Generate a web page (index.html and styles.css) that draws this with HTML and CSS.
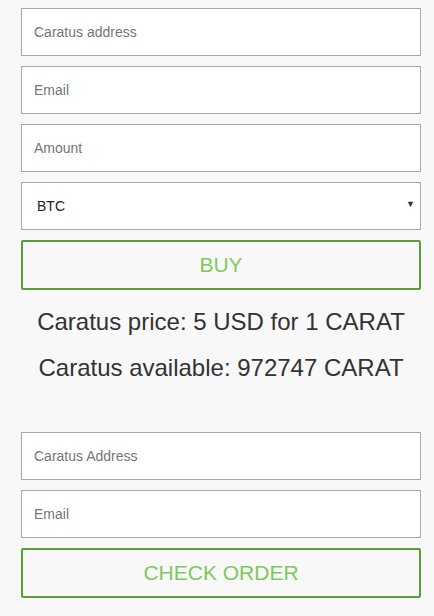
FILE: index.html
```html
<!DOCTYPE html>
<html>
<head>
<meta charset="utf-8">
<link rel="stylesheet" href="styles.css">
</head>
<body>
<div class="page">
  <form class="form">
    <input class="field" type="text" placeholder="Caratus address">
    <input class="field" type="text" placeholder="Email">
    <input class="field" type="text" placeholder="Amount">
    <div class="select-wrap">
      <select class="field select"><option>BTC</option></select>
      <span class="arrow">&#9660;</span>
    </div>
    <button class="btn" type="button">BUY</button>
  </form>
  <div class="info">
    <p class="line">Caratus price: 5 USD for 1 CARAT</p>
    <p class="line">Caratus available: 972747 CARAT</p>
  </div>
  <form class="form">
    <input class="field" type="text" placeholder="Caratus Address">
    <input class="field" type="text" placeholder="Email">
    <button class="btn" type="button">CHECK ORDER</button>
  </form>
</div>
</body>
</html>
```
FILE: styles.css
```css
html, body {
  margin: 0;
  padding: 0;
  background: #f8f8f8;
  font-family: "Liberation Sans", Arial, sans-serif;
}
.page {
  width: 400px;
  padding: 8px 0 0 21px;
}
.form {
  display: flex;
  flex-direction: column;
  gap: 10px;
  margin: 0;
}
.field {
  box-sizing: border-box;
  width: 400px;
  height: 48px;
  margin: 0;
  padding: 0 12px;
  border: 1px solid #a9a9a9;
  border-radius: 0;
  background: #fff;
  font-family: "Liberation Sans", Arial, sans-serif;
  font-size: 14px;
  color: #222;
  outline: none;
}
.field::placeholder {
  color: #757575;
}
.select-wrap {
  position: relative;
  height: 48px;
}
.select {
  appearance: none;
  -webkit-appearance: none;
  padding-left: 15px;
  color: #222;
}
.arrow {
  position: absolute;
  right: 6px;
  top: 17px;
  font-size: 9px;
  color: #333;
  pointer-events: none;
}
.btn {
  box-sizing: border-box;
  width: 400px;
  height: 50px;
  margin: 0;
  border: 2px solid #5a9e3a;
  border-radius: 2px;
  background: #f8f8f8;
  color: #7dc95e;
  font-family: "Liberation Sans", Arial, sans-serif;
  font-size: 21px;
  padding: 0;
}
.info {
  padding: 9px 0 41px;
}
.line {
  margin: 0;
  height: 46px;
  line-height: 46px;
  text-align: center;
  font-size: 24px;
  color: #333;
}
```
